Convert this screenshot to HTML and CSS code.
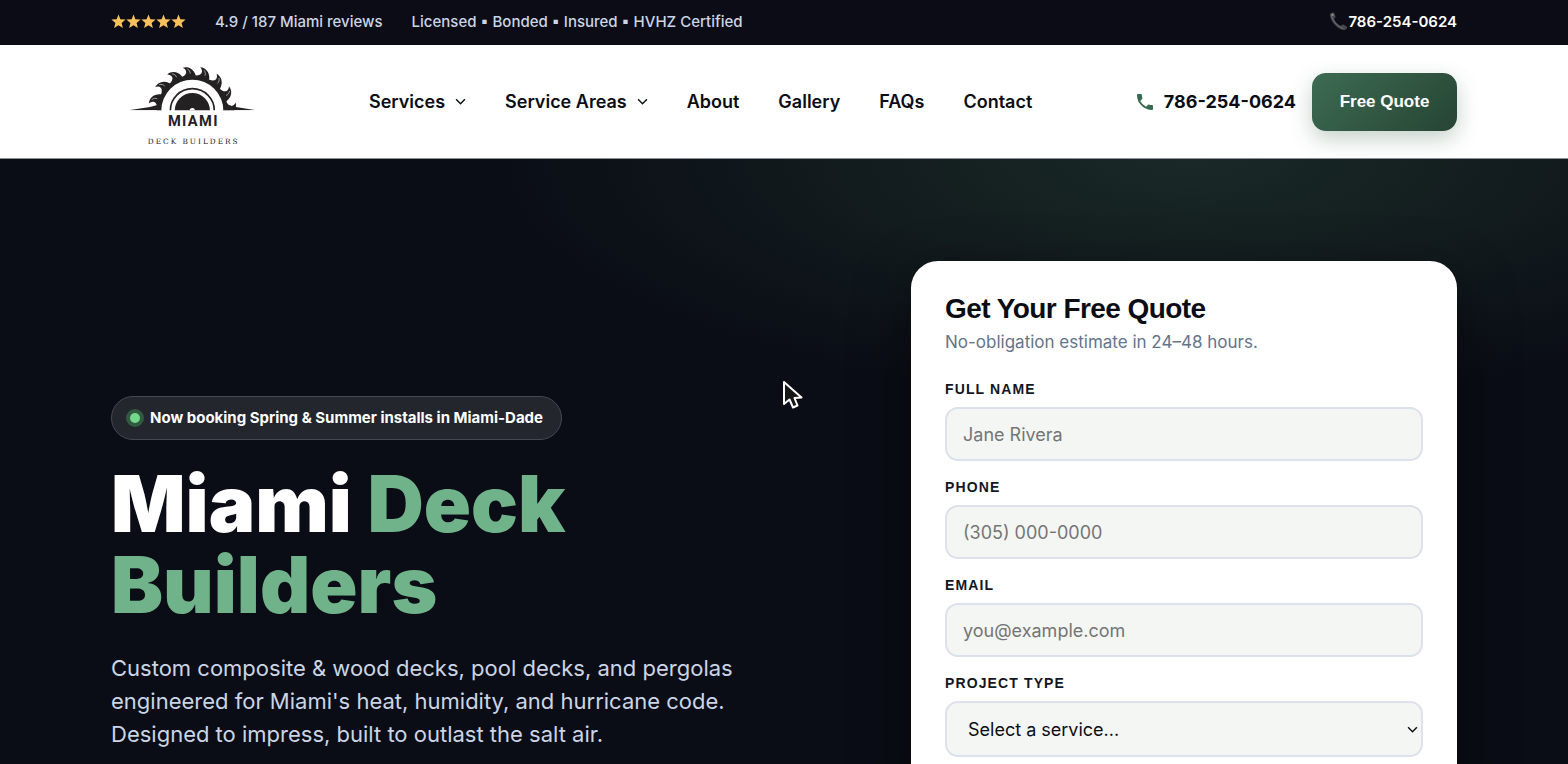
FILE: index.html
```html
<!DOCTYPE html>
<html lang="en">
<head>
    <meta charset="UTF-8">
    <meta name="viewport" content="width=device-width, initial-scale=1.0">
    <title>Miami Deck Builders</title>
    <link rel="stylesheet" href="styles.css">
</head>
<body>
    <div class="topbar">
        <div class="container topbar-inner">
            <svg class="stars" viewBox="0 0 75 15" role="img" aria-label="5 stars">
                <defs>
                    <path id="star" d="M7.5 0.5 L9.4 5.3 L14.6 5.6 L10.6 8.9 L11.9 14 L7.5 11.2 L3.1 14 L4.4 8.9 L0.4 5.6 L5.6 5.3 Z"/>
                </defs>
                <use href="#star"/>
                <use href="#star" x="15"/>
                <use href="#star" x="30"/>
                <use href="#star" x="45"/>
                <use href="#star" x="60"/>
            </svg>
            <span>4.9 / 187 Miami reviews</span>
            <span>Licensed ▪ Bonded ▪ Insured ▪ HVHZ Certified</span>
            <a class="topbar-phone" href="tel:7862540624">
                <svg viewBox="0 0 20 20" aria-hidden="true">
                    <path d="M1 3 C1 1 4 0 5.5 1 L7 5 C7 6.5 5 6.5 5.5 8 C7 11 9.5 13.5 12 14.5 C13.5 15 13.5 13 15 13.2 L19 15.5 C19.5 17.5 17.5 19.5 15 19 C8 17.5 1.5 10 1 3 Z" fill="#47474b"/>
                    <path d="M2.5 3 C3 8 7 14 15 17.5" fill="none" stroke="#737378"/>
                    <circle cx="3.8" cy="3" r="1.2" fill="#909095"/>
                </svg>786-254-0624</a>
        </div>
    </div>

    <header class="header">
        <div class="container header-inner">
            <a class="logo" href="#" aria-label="Miami Deck Builders">
                <svg viewBox="0 0 435 300">
                    <defs>
                        <g id="tooth">
                            <path d="M-4 -132 C12 -134 27 -124 30 -104 L28 -90 L-26 -90 L-22 -106 C-12 -103 2 -108 4 -117 C5 -123 2 -128 -4 -132 Z"/>
                            <path d="M9 -126 C15 -121 16 -116 15 -110" fill="none" stroke="#fff" stroke-width="1.5"/>
                        </g>
                        <clipPath id="ground"><path d="M0 0 H435 V166 H0 Z"/></clipPath>
                    </defs>
                    <g fill="#242122" clip-path="url(#ground)">
                        <g transform="translate(217 167)">
                            <use href="#tooth" transform="rotate(-79)"/>
                            <use href="#tooth" transform="rotate(-56)"/>
                            <use href="#tooth" transform="rotate(-33)"/>
                            <use href="#tooth" transform="rotate(-11)"/>
                            <use href="#tooth" transform="rotate(12)"/>
                            <use href="#tooth" transform="rotate(35)"/>
                            <use href="#tooth" transform="rotate(58)"/>
                            <use href="#tooth" transform="rotate(81)"/>
                        </g>
                        <path d="M25 166 L90 156 L125 146 V166 Z M408 166 L348 156 L308 146 V166 Z"/>
                        <circle cx="217" cy="167" r="93" fill="#fff"/>
                        <circle cx="217" cy="167" r="66" fill="none" stroke="#242122" stroke-width="5"/>
                        <circle cx="217" cy="167" r="53"/>
                        <circle cx="217" cy="167" r="8" fill="#fff"/>
                    </g>
                    <text class="logo-name" x="220" y="213">MIAMI</text>
                    <text class="logo-sub" x="221" y="266">DECK BUILDERS</text>
                </svg>
            </a>
            <nav class="nav">
                <a href="#">Services
                    <svg viewBox="0 0 10 10"><path d="M1 3 L5 7 L9 3"/></svg>
                </a>
                <a href="#">Service Areas
                    <svg viewBox="0 0 10 10"><path d="M1 3 L5 7 L9 3"/></svg>
                </a>
                <a href="#">About</a>
                <a href="#">Gallery</a>
                <a href="#">FAQs</a>
                <a href="#">Contact</a>
            </nav>
            <div class="header-cta">
                <a class="header-phone" href="tel:7862540624">
                    <svg viewBox="3 3 18 18"><path d="M6.62 10.79a15.05 15.05 0 0 0 6.59 6.59l2.2-2.2a1 1 0 0 1 1.02-.24c1.12.37 2.33.57 3.57.57a1 1 0 0 1 1 1V20a1 1 0 0 1-1 1A17 17 0 0 1 3 4a1 1 0 0 1 1-1h3.5a1 1 0 0 1 1 1c0 1.25.2 2.45.57 3.57a1 1 0 0 1-.25 1.02z"/></svg>
                    786-254-0624
                </a>
                <button type="button" class="btn-quote">Free Quote</button>
            </div>
        </div>
    </header>

    <main class="hero">
        <div class="container hero-grid">
            <section class="hero-text">
                <p class="badge"><span class="badge-dot"></span>Now booking Spring &amp; Summer installs in Miami-Dade</p>
                <h1>Miami <span>Deck</span> <span>Builders</span></h1>
                <p class="lead">Custom composite &amp; wood decks, pool decks, and pergolas engineered for Miami's heat, humidity, and hurricane code. Designed to impress, built to outlast the salt air.</p>
            </section>
            <section class="quote-card">
                <h2>Get Your Free Quote</h2>
                <p class="quote-note">No-obligation estimate in 24–48 hours.</p>
                <form autocomplete="off">
                    <div class="field">
                        <label for="name">Full Name</label>
                        <input type="text" id="name" placeholder="Jane Rivera">
                    </div>
                    <div class="field">
                        <label for="phone">Phone</label>
                        <input type="tel" id="phone" placeholder="(305) 000-0000">
                    </div>
                    <div class="field">
                        <label for="email">Email</label>
                        <input type="email" id="email" placeholder="you@example.com">
                    </div>
                    <div class="field">
                        <label for="project">Project Type</label>
                        <div class="select-wrap">
                            <select id="project">
                                <option>Select a service...</option>
                            </select>
                            <svg viewBox="0 0 10 10"><path d="M1 3 L5 7 L9 3"/></svg>
                        </div>
                    </div>
                </form>
            </section>
        </div>
    </main>

    <svg class="pointer" viewBox="0 0 20 30" aria-hidden="true">
        <path d="M1 2 L1 24 L6.5 19.5 L10 27.5 L14.5 25.5 L11.5 18 L18.5 17.5 Z"/>
    </svg>
</body>
</html>
```
FILE: styles.css
```css
* {
    box-sizing: border-box;
}
body {
    margin: 0;
    height: 100vh;
    display: flex;
    flex-direction: column;
    overflow: hidden;
    background: #0a0d15;
    color: #0b0d15;
    font-family: Inter, 'Liberation Sans', sans-serif;
}
h1, h2, p {
    margin: 0;
}
a {
    color: inherit;
    text-decoration: none;
}
.container {
    width: calc(100% - 48px);
    max-width: 1346px;
    margin: 0 auto;
}

/* top bar */
.topbar {
    background: #0b0c15;
    color: #cbd5e6;
    font-size: 15px;
    font-weight: 500;
    line-height: 21px;
    padding: 11px 0 13px;
}
.topbar-inner {
    display: flex;
    align-items: center;
    gap: 29px;
}
.stars {
    width: 75px;
    height: 15px;
    fill: #f8c15c;
}
.topbar-phone {
    display: flex;
    align-items: center;
    margin-left: auto;
    color: #fff;
    font-weight: 600;
}
.topbar-phone svg {
    width: 19px;
    height: 19px;
}

/* header */
.header {
    background: #fff;
    border-bottom: 1px solid #8b939c;
}
.header-inner {
    display: flex;
    align-items: center;
    height: 113px;
}
.logo {
    padding: 6px 104px 0 9px;
}
.logo svg {
    display: block;
    width: 145px;
    height: 100px;
}
.logo text {
    fill: #242122;
    text-anchor: middle;
}
.logo-name {
    font-family: Roboto, 'Liberation Sans', sans-serif;
    font-size: 44px;
    font-weight: 700;
    letter-spacing: 4px;
}
.logo-sub {
    font-family: 'DejaVu Serif', serif;
    font-size: 22px;
    letter-spacing: 6px;
}
.nav {
    display: flex;
    gap: 39px;
    font-size: 18px;
    font-weight: 600;
}
.nav a {
    display: flex;
    align-items: center;
    gap: 10px;
}
.nav svg,
.select-wrap svg {
    width: 11px;
    height: 11px;
    fill: none;
    stroke: #0b0d15;
    stroke-width: 1.3;
}
.header-cta {
    display: flex;
    align-items: center;
    gap: 16px;
    margin-left: auto;
}
.header-phone {
    display: flex;
    align-items: center;
    gap: 11px;
    font-size: 18px;
    font-weight: 700;
}
.header-phone svg {
    width: 16px;
    height: 16px;
    fill: #386b50;
}
.btn-quote {
    width: 145px;
    height: 58px;
    border: none;
    border-radius: 14px;
    background: linear-gradient(135deg, #3d6b52, #264434);
    box-shadow: 0 8px 22px rgba(45, 90, 66, 0.28);
    color: #fff;
    font-family: 'Liberation Sans', sans-serif;
    font-size: 17px;
    font-weight: 700;
    cursor: pointer;
}

/* hero */
.hero {
    flex: 1;
    min-height: 0;
    overflow: hidden;
    background: radial-gradient(ellipse 700px 240px at 76% 0, #1a2927, #0a0d15);
}
.hero-grid {
    display: grid;
    grid-template-columns: minmax(0, 1fr) 546px;
    gap: 68px;
    padding-top: 102px;
}
.hero-text {
    padding-top: 135px;
}
.badge {
    display: inline-flex;
    align-items: center;
    gap: 10px;
    padding: 10px 18px 11px;
    border: 1px solid #454850;
    border-radius: 22px;
    background: #23262d;
    color: #fff;
    font-size: 15px;
    font-weight: 700;
    line-height: 21px;
}
.badge-dot {
    width: 10px;
    height: 10px;
    border-radius: 50%;
    background: #76d88d;
    box-shadow: 0 0 0 4px #315a40;
}
h1 {
    max-width: 600px;
    margin-top: 23px;
    color: #fff;
    font-size: 78px;
    font-weight: 900;
    line-height: 81px;
}
h1 span {
    color: #70b38b;
}
.lead {
    max-width: 650px;
    margin-top: 27px;
    color: #cbd5e6;
    font-size: 22px;
    line-height: 33px;
}

/* quote form */
.quote-card {
    padding: 34px;
    border-radius: 27px;
    background: #fff;
    box-shadow: 0 20px 60px rgba(0, 0, 0, 0.45);
}
.quote-card h2 {
    font-family: 'Liberation Sans', sans-serif;
    font-size: 28px;
    line-height: 28px;
    letter-spacing: -0.02em;
}
.quote-note {
    margin: 7px 0 25px;
    color: #64748b;
    font-size: 17px;
    line-height: 24px;
}
.field {
    margin-bottom: 16px;
}
.field label {
    display: block;
    margin-bottom: 8px;
    color: #14171f;
    font-family: 'Liberation Sans', sans-serif;
    font-size: 14px;
    font-weight: 700;
    line-height: 20px;
    letter-spacing: 0.08em;
    text-transform: uppercase;
}
.field input,
.field select {
    display: block;
    width: 100%;
    height: 54px;
    padding: 0 16px;
    border: 2px solid #dce1eb;
    border-radius: 13px;
    background: #f4f6f3;
    color: #0b0d15;
    font-family: inherit;
    font-size: 18px;
}
.field input::placeholder {
    color: #757575;
}
.field select {
    height: 56px;
    padding-left: 21px;
    appearance: none;
}
.select-wrap {
    position: relative;
}
.select-wrap svg {
    position: absolute;
    top: 23px;
    right: 5px;
    pointer-events: none;
}

/* mouse pointer over the page */
.pointer {
    position: absolute;
    top: 380px;
    left: 783px;
    width: 20px;
    height: 30px;
    fill: #171717;
    stroke: #fff;
    stroke-width: 2;
    stroke-linejoin: round;
}

@media (max-width: 1100px) {
    .nav {
        display: none;
    }
    .hero-grid {
        grid-template-columns: 1fr;
    }
    body {
        height: auto;
        overflow: auto;
    }
}
```
